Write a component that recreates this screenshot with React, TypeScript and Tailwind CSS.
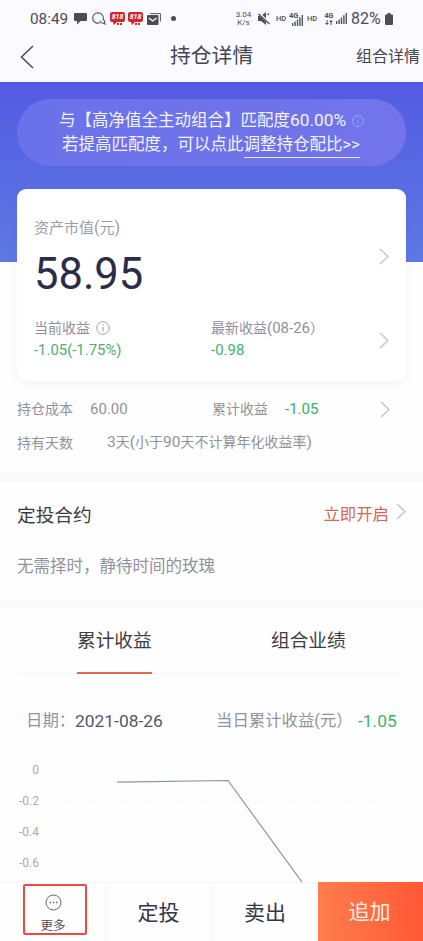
import React from "react";

function Chevron({ className = "" }: { className?: string }) {
  return (
    <svg className={`h-[17px] w-[10px] shrink-0 ${className}`} viewBox="0 0 10 17" fill="none" stroke="#c5c5ca" strokeWidth="1.5">
      <path d="M1 1l8 7.5L1 16" />
    </svg>
  );
}

function Info({ className = "" }: { className?: string }) {
  return (
    <svg className={`shrink-0 ${className}`} viewBox="0 0 14 14" fill="none" stroke="currentColor">
      <circle cx="7" cy="7" r="6.3" />
      <path d="M7 6v4.3M7 3.4v1.3" strokeWidth="1.2" />
    </svg>
  );
}

function Signal({ className = "" }: { className?: string }) {
  return (
    <svg className={`h-[11px] w-[11px] shrink-0 ${className}`} viewBox="0 0 11 11" fill="#55565c">
      <path d="M0 8h1.4v3H0zM2.4 6.5h1.4V11H2.4zM4.8 4.5h1.4V11H4.8zM7.2 2.3h1.4V11H7.2zM9.6 0H11v11H9.6z" />
    </svg>
  );
}

function RedApp({ className = "" }: { className?: string }) {
  return (
    <div className={`flex h-[14px] w-[15px] shrink-0 flex-col items-center ${className}`}>
      <div className="flex h-[10px] w-[15px] items-center justify-center rounded-[2px] bg-[#cf2630] text-[7px] leading-[10px] font-bold text-white italic">
        818
      </div>
      <svg className="h-[4px] w-[9px]" viewBox="0 0 9 4" fill="#cf2630">
        <path d="M0 0h4L1 3zM4 1h2v2H4zM7 1h2v2H7z" />
      </svg>
    </div>
  );
}

function StatusBar() {
  return (
    <div className="flex h-[37px] items-center pl-[30px] text-[#4c4d53]">
      <span className="w-[38px] pt-[1px] text-[15.300px]">08:49</span>
      <svg className="ml-[6px] h-[13px] w-[13px] shrink-0" viewBox="0 0 13 13" fill="#4c4d53">
        <path d="M1 1h11q1 0 1 1v6q0 1-1 1H6.5L3 12.500V9H1Q0 9 0 8V2q0-1 1-1z" />
      </svg>
      <svg className="ml-[5px] h-[13px] w-[14px] shrink-0" viewBox="0 0 14 13" fill="none" stroke="#55565c" strokeWidth="1.1">
        <path d="M7.500 10.700C4 12.200.7 9.700.7 6.200.7 3 3 .9 6 .9s5.400 2.200 5.400 5.300c0 1-.2 1.800-.6 2.500" />
        <path d="M8 8.500c0 2 1.500 2.800 3 2.500l2 1-.6-1.600c.5-.7.5-1.600-.1-2.300" />
      </svg>
      <RedApp className="ml-[4px]" />
      <RedApp className="ml-[3px]" />
      <svg className="ml-[4px] h-[12px] w-[14px] shrink-0" viewBox="0 0 14 12">
        <path d="M3 .6h10.400v8" fill="none" stroke="#55565c" />
        <rect y="2" width="11.500" height="10" rx="1" fill="#4c4d53" />
        <path d="M2 5l3.700 3L9.600 5" fill="none" stroke="#fff" strokeWidth="1.300" />
      </svg>
      <span className="ml-[10px] h-[5px] w-[5px] shrink-0 rounded-full bg-[#4c4d53]" />
      <div className="ml-[59px] w-[17px] pt-[1px] text-center text-[8px] leading-[8px]">
        <div className="h-[8px]">3.04</div>
        <div className="h-[8px]">K/s</div>
      </div>
      <svg className="ml-[6px] h-[13px] w-[12px] shrink-0" viewBox="0 0 12 13" fill="#4c4d53">
        <path d="M0 4h3l5-4v13L3 9H0z" />
        <path d="M.5 1L12 12" stroke="#fafaff" strokeWidth="2.500" />
        <path d="M.5 2L11.500 12M9.500 3l1.500-1.500" stroke="#4c4d53" strokeWidth="1.300" />
      </svg>
      <span className="ml-[6px] w-[11px] text-[7.500px] font-medium">HD</span>
      <div className="ml-[2px] flex h-[14px] w-[14px] items-end">
        <span className="w-[3px] self-start text-[7.500px] leading-[8px] font-bold">4G</span>
        <Signal />
      </div>
      <span className="ml-[4px] w-[11px] text-[7.500px] font-medium">HD</span>
      <div className="ml-[6px] flex h-[14px] w-[10px] flex-col items-center">
        <span className="text-[7px] leading-[8px] font-bold">4G</span>
        <svg className="h-[5px] w-[8px]" viewBox="0 0 8 5" fill="#4c4d53">
          <path d="M1.500 0h1v3H4L2 5 0 3h1.500zM5.500 5h1V2H8L6 0 4 2h1.500z" />
        </svg>
      </div>
      <Signal className="ml-[2px]" />
      <span className="ml-[4px] w-[32px] pt-[1px] text-[16px]">82%</span>
      <svg className="ml-[2px] h-[12px] w-[8px] shrink-0" viewBox="0 0 8 12" fill="#4c4d53">
        <path d="M2.500 0h3v1.500H7q1 0 1 1V11q0 1-1 1H1q-1 0-1-1V2.500q0-1 1-1h1.500z" />
      </svg>
    </div>
  );
}

function Header() {
  return (
    <div className="flex h-[45px] items-center pb-[6px] text-[#45464d]">
      <svg className="mt-[1px] ml-[20px] h-[24px] w-[14px] shrink-0" viewBox="0 0 14 24" fill="none" stroke="#4a4a50" strokeWidth="1.500">
        <path d="M13 1L1.500 12 13 23" />
      </svg>
      <h1 className="ml-[136px] w-[186px] text-[20.800px]">持仓详情</h1>
      <span className="text-[16px]">组合详情</span>
    </div>
  );
}

function Banner() {
  return (
    <div className="h-[180px] bg-linear-to-b from-[#535be2] to-[#5d78e4] px-[17px] pt-[17px]">
      <div className="h-[67px] rounded-full bg-linear-to-r from-[#6a72ea] to-[#7274ea] pt-[9px] text-[16.500px] leading-[25px] text-[#f3f3ff]">
        <div className="flex h-[25px] items-center pl-[42px]">
          <span>与【高净值全主动组合】匹配度<span className="text-[17.300px]">60.00%</span></span>
          <Info className="ml-[6px] h-[12px] w-[12px] text-[#a5a8f5]" />
        </div>
        <div className="-mt-[1px] flex h-[26px] pl-[45px]">
          <span>若提高匹配度，可以点此</span>
          <span className="border-b border-[#e8e8ff]">调整持仓配比&gt;&gt;</span>
        </div>
      </div>
    </div>
  );
}

function AssetCard() {
  return (
    <div className="relative mx-[17px] -mt-[73px] h-[192px] rounded-[9px] bg-white pl-[17px] shadow-[0_3px_10px_rgba(60,60,90,0.05)]">
      <div className="flex h-[134px] items-center justify-between pr-[17px]">
        <div className="h-[134px] pt-[28px]">
          <div className="h-[22px] text-[15px] leading-[22px] text-[#9c9cac]">资产市值<span className="text-[16px]">(</span>元<span className="text-[16px]">)</span></div>
          <div className="mt-[10px] h-[52px] text-[43.500px] leading-[52px] text-[#2b2c47]">58.95</div>
        </div>
        <Chevron />
      </div>
      <div className="-mt-[6px] flex h-[46px] items-center pr-[17px] text-[15px] leading-[22px]">
        <div className="w-[177px]">
          <div className="flex h-[22px] items-center text-[14px] text-[#8f8f98]">
            当前收益
            <Info className="ml-[6px] h-[14px] w-[14px] text-[#a4a4ac]" />
          </div>
          <div className="h-[24px] text-[14.900px] leading-[23px] text-[#4baf70]">-1.05(-1.75%)</div>
        </div>
        <div className="grow">
          <div className="h-[22px] text-[14px] text-[#8f8fa0]">最新收益<span className="text-[15px]">(08-26</span>）</div>
          <div className="h-[24px] leading-[23px] text-[#3fb26b]">-0.98</div>
        </div>
        <Chevron />
      </div>
    </div>
  );
}

function Details() {
  return (
    <div className="h-[91px] px-[17px] pt-[16px] text-[14px] text-[#929299]">
      <div className="flex h-[24px] items-center">
        <span className="w-[73px]">持仓成本</span>
        <span className="w-[122px] text-[15px]">60.00</span>
        <span className="w-[73px]">累计收益</span>
        <span className="grow text-[15px] text-[#30b45e]">-1.05</span>
        <Chevron className="mr-[16px]" />
      </div>
      <div className="mt-[10px] flex h-[24px] items-center">
        <span className="w-[90px]">持有天数</span>
        <span>
          <span className="text-[15.500px]">3</span>天<span className="text-[15.500px]">(</span>小于<span className="text-[15.500px]">90</span>
          天不计算年化收益率<span className="text-[15.500px]">)</span>
        </span>
      </div>
    </div>
  );
}

function Plan() {
  return (
    <div className="h-[118px] px-[17px]">
      <div className="flex h-[56px] items-center justify-between border-b border-[#fcfcfc] pt-[8px]">
        <h2 className="pt-[5px] text-[18.700px] text-[#3a3b42]">定投合约</h2>
        <div className="flex items-center text-[16.400px] text-[#d0694f]">
          <span className="pt-[3px]">立即开启</span>
          <Chevron className="-mt-[4px] ml-[7px]" />
        </div>
      </div>
      <p className="mt-[17px] h-[24px] text-[16.500px] leading-[24px] text-[#92929c]">无需择时，静待时间的玫瑰</p>
    </div>
  );
}

const ticks = ["0", "-0.2", "-0.4", "-0.6"];

function Performance() {
  return (
    <div className="h-[274px] overflow-hidden">
      <div className="mx-[17px] flex h-[66px] border-b border-[#f4f4f5] pl-[60px] text-[18.700px] text-[#3e3e42]">
        <div className="h-[66px] w-[75px] border-b-2 border-[#e2694e] leading-[66px]">累计收益</div>
        <div className="ml-[119px] leading-[66px]">组合业绩</div>
      </div>
      <div className="mt-[35px] flex h-[24px] items-center pl-[26px] text-[16.400px] text-[#9292a2]">
        <span className="w-[49px]">日期：</span>
        <span className="w-[141px] text-[17.400px] text-[#55566a]">2021-08-26</span>
        <span className="w-[142px]">当日累计收益(元）</span>
        <span className="text-[17.400px] text-[#37b765]">-1.05</span>
      </div>
      <div className="mt-[22px] flex">
        <div className="w-[39px] text-right text-[12px] text-[#aaaab0]">
          {ticks.map((t) => (
            <div key={t} className="h-[31px] leading-[30px]">{t}</div>
          ))}
        </div>
        <svg className="h-[128px] w-[384px] shrink-0" viewBox="39 755 384 128" fill="none">
          <path d="M64 770.500H390M64 801.500H390M64 832.500H390M64 863.500H390" stroke="#f6f6f8" strokeDasharray="4 3" />
          <path d="M117 782.200L228 780.500L302 882" stroke="#8b90aa" strokeWidth="1.200" />
        </svg>
      </div>
    </div>
  );
}

function BottomBar() {
  return (
    <div className="flex h-[59px] text-[21px] text-[#35364a]">
      <div className="w-[106px] border-t border-r border-[#f6f6f8] pt-[1px] pl-[23px]">
        <div className="flex h-[51px] w-[64px] flex-col items-center rounded-[2px] border-2 border-[#ee4a42] pt-[8px]">
          <svg className="h-[17px] w-[17px] shrink-0 -translate-x-[2px]" viewBox="0 0 17 17" fill="none" stroke="#66666c">
            <circle cx="8.500" cy="8.500" r="7.500" />
            <path d="M4.500 8.500h1.500M7.750 8.500h1.500M11 8.500h1.500" strokeWidth="1.500" />
          </svg>
          <span className="mt-[5px] -translate-x-[2px] text-[12.500px] leading-[20px] text-[#505056]">更多</span>
        </div>
      </div>
      <div className="flex w-[106px] items-center justify-center border-t border-r border-[#f6f6f8] pt-[3px]">定投</div>
      <div className="flex w-[106px] items-center justify-center border-t border-[#f6f6f8] pt-[3px]">卖出</div>
      <div className="flex grow items-center justify-center bg-linear-to-r from-[#ff7d4c] to-[#ff5836] pt-[3px] pr-[2px] text-[#fff0e4]">追加</div>
    </div>
  );
}

export default function App() {
  return (
    <div className="h-[941px] w-[423px] overflow-hidden bg-[#fefefe] font-[Roboto,'Noto_Sans_CJK_SC',sans-serif] whitespace-nowrap">
      <div className="bg-[#fafaff]">
        <StatusBar />
        <Header />
      </div>
      <Banner />
      <AssetCard />
      <Details />
      <div className="h-[10px] bg-[#f9f9fd]" />
      <Plan />
      <div className="h-[8px] bg-[#f9f9fd]" />
      <Performance />
      <BottomBar />
    </div>
  );
}
